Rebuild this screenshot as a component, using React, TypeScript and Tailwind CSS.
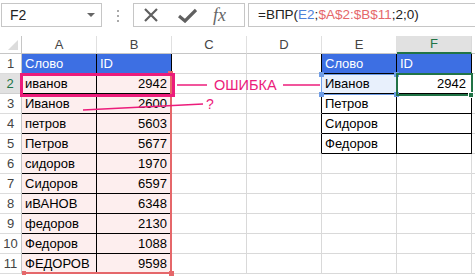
import React from 'react';

const data: [string, string][] = [
  ['иванов', '2942'],
  ['Иванов', '2600'],
  ['петров', '5603'],
  ['Петров', '5677'],
  ['сидоров', '1970'],
  ['Сидоров', '6597'],
  ['иВАНОВ', '6348'],
  ['федоров', '2130'],
  ['Федоров', '1088'],
  ['ФЕДОРОВ', '9598'],
];

const lookup = ['Иванов', 'Петров', 'Сидоров', 'Федоров'];

const gray = 'border-r border-b border-[#d9d9d9]';
const black = 'border-r border-b border-black';

const Toolbar: React.FC = () => (
  <div className="flex h-[36px] items-start pt-[3px] bg-white">
    {/* Имя ячейки */}
    <div className="ml-[1px] flex h-[24px] w-[101px] items-center justify-between border border-[#c6c6c6] pl-[8px] pr-[6px] text-[14px] text-[#222]">
      <span>F2</span>
      <span className="h-0 w-0 border-x-[4px] border-t-[4px] border-x-transparent border-t-[#666]" />
    </div>
    <div className="flex w-[31px] flex-col items-center gap-[3px] pt-[7px]">
      <span className="h-[2px] w-[2px] bg-[#aaa]" />
      <span className="h-[2px] w-[2px] bg-[#aaa]" />
      <span className="h-[2px] w-[2px] bg-[#aaa]" />
    </div>
    {/* Кнопки */}
    <div className="flex h-[24px] w-[112px] items-center border border-[#c6c6c6] pl-[9px]">
      <svg width="16" height="16" viewBox="0 0 16 16" className="mr-[19px]">
        <path d="M2 2 L14 14 M14 2 L2 14" stroke="#606060" strokeWidth="2.2" />
      </svg>
      <svg width="19" height="15" viewBox="0 0 19 15" className="mr-[16px]">
        <path d="M1 8 L7 13 L18 2" stroke="#606060" strokeWidth="3.2" fill="none" />
      </svg>
      <span className="font-['Liberation_Serif',serif] text-[18px] italic leading-none text-[#666]">fx</span>
    </div>
    {/* Строка формул */}
    <div className="ml-[3px] flex h-[24px] flex-1 items-center border border-r-0 border-[#c6c6c6] pl-[9px] text-[13.5px] text-[#222]">
      <span>=ВПР(</span>
      <span className="text-[#4f81d8]">E2</span>
      <span>;</span>
      <span className="text-[#e5676a]">$A$2:$B$11</span>
      <span>;2;0)</span>
    </div>
  </div>
);

const App: React.FC = () => {
  const cols = ['A', 'B', 'C', 'D', 'E', 'F'];

  const rows = Array.from({ length: 11 }, (_, i) => i + 1);

  return (
    <div className="h-[277px] w-[475px] overflow-hidden bg-white font-['Liberation_Sans',Arial,sans-serif] text-black">
      <Toolbar />
      <div className="relative">
        <div className="grid grid-cols-[22px_repeat(6,75px)_1fr]">
          {/* Заголовки столбцов */}
          <div className="relative h-[18px] border-r border-b border-[#c6c6c6]">
            <span className="absolute bottom-[3px] right-[3px] h-0 w-0 border-l-[10px] border-t-[10px] border-l-transparent border-t-transparent border-b-0 border-r-[10px] border-r-[#dcdcdc]" />
          </div>
          {cols.map((c) =>
            c === 'F' ? (
              <div key={c} className="flex h-[18px] items-center justify-center border-r border-r-[#d9d9d9] border-b-2 border-b-[#217346] bg-[#e1e1e1] text-[13px] text-[#217346]">
                {c}
              </div>
            ) : (
              <div key={c} className="flex h-[18px] items-center justify-center border-r border-b border-r-[#e0e0e0] border-b-[#c6c6c6] text-[13px] text-[#444]">
                {c}
              </div>
            )
          )}
          <div className="h-[18px] border-b border-[#c6c6c6]" />

          {rows.map((r) => {
            const row = r >= 2 ? data[r - 2] : null;
            const lk = r >= 2 && r <= 5 ? lookup[r - 2] : '';
            return (
              <React.Fragment key={r}>
                {r === 2 ? (
                  <div className="flex h-[20px] items-center justify-center border-r-2 border-b border-r-[#217346] border-b-[#d0d0d0] bg-[#e1e1e1] text-[13px] text-[#217346]">
                    {r}
                  </div>
                ) : (
                  <div className="flex h-[20px] items-center justify-center border-r border-b border-r-[#c6c6c6] border-b-[#dcdcdc] text-[13px] text-[#444]">
                    {r}
                  </div>
                )}
                {r === 1 ? (
                  <>
                    <div className={`flex h-[20px] items-center bg-[#3d6fe3] px-[3px] text-[13px] text-white ${black}`}>Слово</div>
                    <div className={`flex h-[20px] items-center bg-[#3d6fe3] px-[3px] text-[13px] text-white ${black}`}>ID</div>
                  </>
                ) : (
                  <>
                    <div className={`flex h-[20px] items-center bg-[#fdeeee] px-[3px] text-[13px] ${black}`}>{row?.[0]}</div>
                    <div className={`flex h-[20px] items-center justify-end bg-[#fdeeee] px-[4px] text-[13px] ${black}`}>{row?.[1]}</div>
                  </>
                )}
                <div className={`h-[20px] ${gray}`} />
                {r <= 5 ? (
                  <div className="h-[20px] border-r border-b border-r-black border-b-[#d9d9d9]" />
                ) : (
                  <div className={`h-[20px] ${gray}`} />
                )}
                {r === 1 ? (
                  <>
                    <div className={`flex h-[20px] items-center bg-[#3d6fe3] px-[3px] text-[13px] text-white ${black}`}>Слово</div>
                    <div className={`flex h-[20px] items-center bg-[#3d6fe3] px-[3px] text-[13px] text-white ${black}`}>ID</div>
                  </>
                ) : r <= 5 ? (
                  <>
                    <div className={`flex h-[20px] items-center px-[3px] text-[13px] ${black} ${r === 2 ? 'bg-[#e8f0fc]' : ''}`}>{lk}</div>
                    <div className={`flex h-[20px] items-center justify-end px-[5px] text-[13px] ${black}`}>{r === 2 ? '2942' : ''}</div>
                  </>
                ) : (
                  <>
                    <div className={`h-[20px] ${gray}`} />
                    <div className={`h-[20px] ${gray}`} />
                  </>
                )}
                <div className={`h-[20px] ${r <= 5 ? 'border-b border-[#d9d9d9]' : 'border-b border-[#d9d9d9]'}`} />
              </React.Fragment>
            );
          })}
        </div>

        {/* Диапазон $A$2:$B$11 */}
        <div className="absolute left-[22px] top-[38px] h-[200px] w-[150px] border-r-2 border-b-2 border-[#e5676a]" />
        <div className="absolute left-[168px] top-[35px] h-[5px] w-[5px] bg-[#e5676a]" />
        <div className="absolute left-[22px] top-[235px] h-[4px] w-[4px] bg-[#e5676a]" />
        <div className="absolute left-[169px] top-[235px] h-[5px] w-[5px] bg-[#e5676a]" />

        {/* Ссылка E2 */}
        <div className="absolute left-[321px] top-[38px] h-[21px] w-[76px] border-[1.5px] border-[#6f9de6]" />
        <div className="absolute left-[319px] top-[36px] h-[5px] w-[5px] bg-[#6f9de6]" />
        <div className="absolute left-[394px] top-[36px] h-[5px] w-[5px] bg-[#6f9de6]" />
        <div className="absolute left-[319px] top-[56px] h-[5px] w-[5px] bg-[#6f9de6]" />
        <div className="absolute left-[394px] top-[56px] h-[5px] w-[5px] bg-[#6f9de6]" />

        {/* Активная ячейка F2 */}
        <div className="absolute left-[396px] top-[37px] h-[23px] w-[77px] border-2 border-[#217346]" />
        <div className="absolute left-[468px] top-[56px] h-[6px] w-[6px] border border-white bg-[#217346]" />

        {/* Пометки */}
        <div className="absolute left-[20px] top-[37px] h-[24px] w-[155px] border-[3px] border-[#ec1c7b]" />
        <svg className="absolute left-0 top-0" width="475" height="241">
          <line x1="177" y1="49" x2="207" y2="49" stroke="#ec1c7b" strokeWidth="1.5" />
          <line x1="283" y1="49" x2="320" y2="49" stroke="#ec1c7b" strokeWidth="1.5" />
          <line x1="83" y1="74" x2="203" y2="68" stroke="#ec1c7b" strokeWidth="1.5" />
        </svg>
        <div className="absolute left-[214px] top-[40px] text-[14.5px] leading-[18px] text-[#ec1c7b]">ОШИБКА</div>
        <div className="absolute left-[206px] top-[59px] text-[14px] leading-[18px] text-[#ec1c7b]">?</div>
      </div>
    </div>
  );
};

export default App;
